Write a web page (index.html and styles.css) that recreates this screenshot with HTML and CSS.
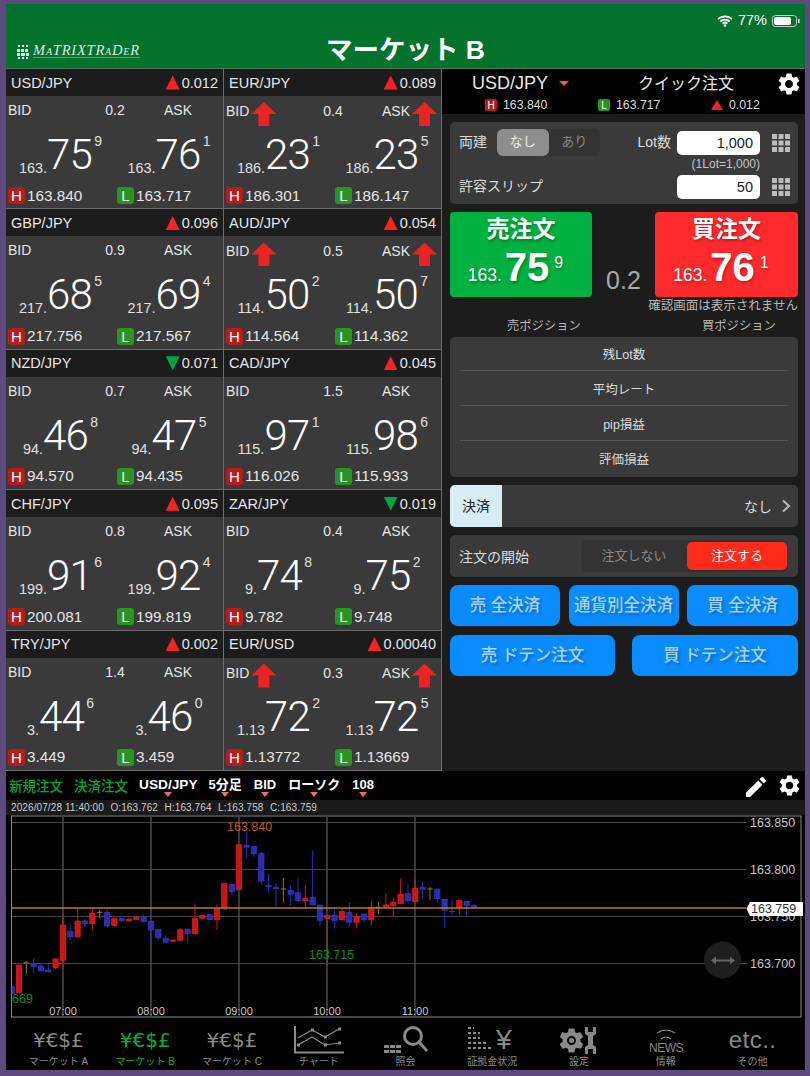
FILE: index.html
```html
<!DOCTYPE html>
<html lang="ja">
  <head>
    <meta charset="utf-8">
    <title>マーケット B</title>
    <link rel="stylesheet" href="styles.css">
  </head>
  <body>
    <svg class="defs" width="0" height="0">
      <symbol id="gear" viewBox="2 2 20 20">
        <path d="M19.14 12.94c.04-.3.06-.61.06-.94 0-.32-.02-.64-.07-.94l2.03-1.58c.18-.14.23-.41.12-.61l-1.92-3.32c-.12-.22-.37-.29-.59-.22l-2.39.96c-.5-.38-1.03-.7-1.62-.94l-.36-2.54c-.04-.24-.24-.41-.48-.41h-3.84c-.24 0-.43.17-.47.41l-.36 2.54c-.59.24-1.13.57-1.62.94l-2.39-.96c-.22-.08-.47 0-.59.22L2.74 8.87c-.12.21-.08.47.12.61l2.03 1.58c-.05.3-.09.63-.09.94s.02.64.07.94l-2.03 1.58c-.18.14-.23.41-.12.61l1.92 3.32c.12.22.37.29.59.22l2.39-.96c.5.38 1.03.7 1.62.94l.36 2.54c.05.24.24.41.48.41h3.84c.24 0 .44-.17.47-.41l.36-2.54c.59-.24 1.13-.56 1.62-.94l2.39.96c.22.08.47 0 .59-.22l1.92-3.32c.12-.22.07-.47-.12-.61l-2.01-1.58zM12 15.6c-1.98 0-3.6-1.62-3.6-3.6s1.62-3.6 3.6-3.6 3.6 1.62 3.6 3.6-1.62 3.6-3.6 3.6z"/>
      </symbol>
      <symbol id="keypad" viewBox="0 0 18 18">
        <path d="M0 0h5v5H0zM6.500 0h5v5h-5zM13 0h5v5h-5zM0 6.500h5v5H0zM6.500 6.500h5v5h-5zM13 6.500h5v5h-5zM0 13h5v5H0zM6.500 13h5v5h-5zM13 13h5v5h-5z"/>
      </symbol>
    </svg>

    <div class="app">
      <header class="topbar">
        <div class="status">
          <svg class="wifi" width="16" height="12" viewBox="0 0 16 12">
            <path d="M1 4.200a10 10 0 0 1 14 0M3.300 6.500a6.800 6.800 0 0 1 9.400 0M5.600 8.700a3.500 3.500 0 0 1 4.800 0" />
            <circle cx="8" cy="10.600" r="1.300" />
          </svg>
          <span>77%</span>
          <svg class="battery" width="28" height="12" viewBox="0 0 28 12">
            <rect x=".5" y=".5" width="24" height="11" rx="3" />
            <rect class="battery-level" x="2" y="2" width="17" height="8" rx="2" />
            <rect class="battery-level" x="26" y="4" width="1.500" height="4" />
          </svg>
        </div>
        <div class="titlerow">
          <div class="logo">
            <svg width="13" height="15" viewBox="0 0 13 15">
              <path d="M1 1h2v2H1zM5 1h2v2H5zM9 1h2v2H9zM0 5h3v3H0zM4 5h3v3H4zM8 5h3v3H8zM0 9h3v3H0zM4 9h4v3H4zM9 9h3v3H9zM1 13h2v2H1zM5 13h2v2H5zM9 13h2v2H9z" />
            </svg>
            <span class="logo-text">MaTRIXTRaDeR</span>
          </div>
          <h1 class="page-title">マーケット B</h1>
        </div>
      </header>

      <main class="main">
        <section class="market-grid">
          <article class="cell">
            <div class="cell-title"><span>USD/JPY</span><span class="change"><i class="tri tri-up"></i>0.012</span></div>
            <div class="cell-head"><span class="side">BID</span><span class="spread">0.2</span><span class="side side-ask">ASK</span></div>
            <div class="prices">
              <div class="price"><small>163.</small><b>75</b><sup>9</sup></div>
              <div class="price"><small>163.</small><b>76</b><sup>1</sup></div>
            </div>
            <div class="hilo"><span><i class="badge badge-h">H</i>163.840</span><span><i class="badge badge-l">L</i>163.717</span></div>
          </article>
          <article class="cell">
            <div class="cell-title"><span>EUR/JPY</span><span class="change"><i class="tri tri-up"></i>0.089</span></div>
            <div class="cell-head"><span class="side">BID<i class="arrow"></i></span><span class="spread">0.4</span><span class="side side-ask">ASK<i class="arrow"></i></span></div>
            <div class="prices">
              <div class="price"><small>186.</small><b>23</b><sup>1</sup></div>
              <div class="price"><small>186.</small><b>23</b><sup>5</sup></div>
            </div>
            <div class="hilo"><span><i class="badge badge-h">H</i>186.301</span><span><i class="badge badge-l">L</i>186.147</span></div>
          </article>
          <article class="cell">
            <div class="cell-title"><span>GBP/JPY</span><span class="change"><i class="tri tri-up"></i>0.096</span></div>
            <div class="cell-head"><span class="side">BID</span><span class="spread">0.9</span><span class="side side-ask">ASK</span></div>
            <div class="prices">
              <div class="price"><small>217.</small><b>68</b><sup>5</sup></div>
              <div class="price"><small>217.</small><b>69</b><sup>4</sup></div>
            </div>
            <div class="hilo"><span><i class="badge badge-h">H</i>217.756</span><span><i class="badge badge-l">L</i>217.567</span></div>
          </article>
          <article class="cell">
            <div class="cell-title"><span>AUD/JPY</span><span class="change"><i class="tri tri-up"></i>0.054</span></div>
            <div class="cell-head"><span class="side">BID<i class="arrow"></i></span><span class="spread">0.5</span><span class="side side-ask">ASK<i class="arrow"></i></span></div>
            <div class="prices">
              <div class="price"><small>114.</small><b>50</b><sup>2</sup></div>
              <div class="price"><small>114.</small><b>50</b><sup>7</sup></div>
            </div>
            <div class="hilo"><span><i class="badge badge-h">H</i>114.564</span><span><i class="badge badge-l">L</i>114.362</span></div>
          </article>
          <article class="cell">
            <div class="cell-title"><span>NZD/JPY</span><span class="change"><i class="tri tri-down"></i>0.071</span></div>
            <div class="cell-head"><span class="side">BID</span><span class="spread">0.7</span><span class="side side-ask">ASK</span></div>
            <div class="prices">
              <div class="price"><small>94.</small><b>46</b><sup>8</sup></div>
              <div class="price"><small>94.</small><b>47</b><sup>5</sup></div>
            </div>
            <div class="hilo"><span><i class="badge badge-h">H</i>94.570</span><span><i class="badge badge-l">L</i>94.435</span></div>
          </article>
          <article class="cell">
            <div class="cell-title"><span>CAD/JPY</span><span class="change"><i class="tri tri-up"></i>0.045</span></div>
            <div class="cell-head"><span class="side">BID</span><span class="spread">1.5</span><span class="side side-ask">ASK</span></div>
            <div class="prices">
              <div class="price"><small>115.</small><b>97</b><sup>1</sup></div>
              <div class="price"><small>115.</small><b>98</b><sup>6</sup></div>
            </div>
            <div class="hilo"><span><i class="badge badge-h">H</i>116.026</span><span><i class="badge badge-l">L</i>115.933</span></div>
          </article>
          <article class="cell">
            <div class="cell-title"><span>CHF/JPY</span><span class="change"><i class="tri tri-up"></i>0.095</span></div>
            <div class="cell-head"><span class="side">BID</span><span class="spread">0.8</span><span class="side side-ask">ASK</span></div>
            <div class="prices">
              <div class="price"><small>199.</small><b>91</b><sup>6</sup></div>
              <div class="price"><small>199.</small><b>92</b><sup>4</sup></div>
            </div>
            <div class="hilo"><span><i class="badge badge-h">H</i>200.081</span><span><i class="badge badge-l">L</i>199.819</span></div>
          </article>
          <article class="cell">
            <div class="cell-title"><span>ZAR/JPY</span><span class="change"><i class="tri tri-down"></i>0.019</span></div>
            <div class="cell-head"><span class="side">BID</span><span class="spread">0.4</span><span class="side side-ask">ASK</span></div>
            <div class="prices">
              <div class="price"><small>9.</small><b>74</b><sup>8</sup></div>
              <div class="price"><small>9.</small><b>75</b><sup>2</sup></div>
            </div>
            <div class="hilo"><span><i class="badge badge-h">H</i>9.782</span><span><i class="badge badge-l">L</i>9.748</span></div>
          </article>
          <article class="cell">
            <div class="cell-title"><span>TRY/JPY</span><span class="change"><i class="tri tri-up"></i>0.002</span></div>
            <div class="cell-head"><span class="side">BID</span><span class="spread">1.4</span><span class="side side-ask">ASK</span></div>
            <div class="prices">
              <div class="price"><small>3.</small><b>44</b><sup>6</sup></div>
              <div class="price"><small>3.</small><b>46</b><sup>0</sup></div>
            </div>
            <div class="hilo"><span><i class="badge badge-h">H</i>3.449</span><span><i class="badge badge-l">L</i>3.459</span></div>
          </article>
          <article class="cell">
            <div class="cell-title"><span>EUR/USD</span><span class="change"><i class="tri tri-up"></i>0.00040</span></div>
            <div class="cell-head"><span class="side">BID<i class="arrow"></i></span><span class="spread">0.3</span><span class="side side-ask">ASK<i class="arrow"></i></span></div>
            <div class="prices">
              <div class="price"><small>1.13</small><b>72</b><sup>2</sup></div>
              <div class="price"><small>1.13</small><b>72</b><sup>5</sup></div>
            </div>
            <div class="hilo"><span><i class="badge badge-h">H</i>1.13772</span><span><i class="badge badge-l">L</i>1.13669</span></div>
          </article>
        </section>

        <section class="quick">
          <div class="quick-head">
            <div class="quick-top">
              <span class="quick-pair">USD/JPY<i class="caret"></i></span>
              <span class="quick-name">クイック注文</span>
              <svg class="quick-gear" width="22" height="22"><use href="#gear" /></svg>
            </div>
            <div class="quick-stats">
              <span><i class="badge badge-h mini">H</i>163.840</span>
              <span><i class="badge badge-l mini">L</i>163.717</span>
              <span><i class="tri tri-up mini-tri"></i>0.012</span>
            </div>
          </div>

          <div class="card form-card">
            <div class="form-row">
              <span class="form-label">両建</span>
              <div class="seg seg-hedge"><span class="seg-on">なし</span><span>あり</span></div>
              <span class="form-label lot-label">Lot数</span>
              <div class="input">1,000</div>
              <svg class="keypad" width="18" height="18"><use href="#keypad" /></svg>
            </div>
            <div class="lot-note">(1Lot=1,000)</div>
            <div class="form-row form-row-slip">
              <span class="form-label">許容スリップ</span>
              <div class="input input-push">50</div>
              <svg class="keypad" width="18" height="18"><use href="#keypad" /></svg>
            </div>
          </div>

          <div class="order-row">
            <div class="order order-sell">
              <div class="order-title">売注文</div>
              <div class="order-price"><small>163.</small><b>75</b><sup>9</sup></div>
            </div>
            <div class="order-spread">0.2</div>
            <div class="order order-buy">
              <div class="order-title">買注文</div>
              <div class="order-price"><small>163.</small><b>76</b><sup>1</sup></div>
            </div>
          </div>
          <div class="confirm-note">確認画面は表示されません</div>
          <div class="pos-labels"><span>売ポジション</span><span>買ポジション</span></div>

          <div class="card pos-card">
            <div class="pos-row">残Lot数</div>
            <div class="pos-row">平均レート</div>
            <div class="pos-row">pip損益</div>
            <div class="pos-row">評価損益</div>
          </div>

          <div class="card settle">
            <span class="settle-tag">決済</span>
            <span class="settle-value">なし</span>
            <svg class="chevron" width="10" height="14" viewBox="0 0 10 14"><path d="M2 1.500 8 7l-6 5.500" /></svg>
          </div>

          <div class="card start">
            <span>注文の開始</span>
            <div class="seg seg-start"><span>注文しない</span><span class="seg-red">注文する</span></div>
          </div>

          <div class="btn-row btn-row-3">
            <div class="btn">売 全決済</div>
            <div class="btn">通貨別全決済</div>
            <div class="btn">買 全決済</div>
          </div>
          <div class="btn-row btn-row-2">
            <div class="btn">売 ドテン注文</div>
            <div class="btn">買 ドテン注文</div>
          </div>
        </section>
      </main>

      <section class="chart">
        <div class="chart-tools">
          <span class="tool-green">新規注文</span>
          <span class="tool-green">決済注文</span>
          <span class="tool-pick tool-pair">USD/JPY</span>
          <span class="tool-pick">5分足</span>
          <span class="tool-pick">BID</span>
          <span class="tool-pick">ローソク</span>
          <span class="tool-pick">108</span>
          <svg class="tool-pencil" width="20" height="20" viewBox="3 3 18 18">
            <path d="M3 17.250V21h3.750L17.810 9.940l-3.750-3.750L3 17.250zM20.710 7.040c.39-.39.39-1.020 0-1.410l-2.340-2.340c-.39-.39-1.020-.39-1.410 0l-1.830 1.830 3.750 3.750 1.830-1.830z" />
          </svg>
          <svg class="tool-gear" width="21" height="21"><use href="#gear" /></svg>
        </div>
        <div class="ohlc">
          <span>2026/07/28 11:40:00</span><span>O:163.762</span><span>H:163.764</span><span>L:163.758</span><span>C:163.759</span>
        </div>
        <svg class="plot" width="799" height="203" viewBox="6 815 799 203">
          <rect class="plot-frame" x="11.500" y="816" width="789.500" height="201" />
          <path class="grid-v" d="M63 817V1016M151 817V1016M239 817V1016M327 817V1016M415 817V1016" />
          <path class="grid-h" d="M12 822.500H747M12 869.500H747M12 916.500H747M12 963.500H747" />
          <text class="axis" x="750" y="827">163.850</text>
          <text class="axis" x="750" y="874">163.800</text>
          <text class="axis" x="750" y="921">163.750</text>
          <text class="axis" x="750" y="968">163.700</text>
          <text class="time" x="63" y="1015">07:00</text>
          <text class="time" x="151" y="1015">08:00</text>
          <text class="time" x="239" y="1015">09:00</text>
          <text class="time" x="327" y="1015">10:00</text>
          <text class="time" x="415" y="1015">11:00</text>

          <!-- candles, coordinates at 3x from y 765 -->
          <g transform="translate(0 765) scale(.3333)">
            <path class="wick-red" d="M167 580V612M189 447V612M233 430V515M277 432V497M343 460V485M387 460V468M541 490V527M585 415V506M607 449V463M651 418V494M673 355V435M717 239V376M916 360V430M982 451V600M1026 432V467M1070 445V491M1114 407V483M1158 385V430M1180 397V454M1202 340V416M1246 342V410M1378 406V449" />
            <path class="body-red" d="M49 600h16v83h-16zM159 582h16v26h-16zM181 480h16v106h-16zM225 468h16v47h-16zM269 445h16v31h-16zM335 460h16v22h-16zM379 462h16v5h-16zM401 457h16v7h-16zM511 525h16v4h-16zM533 494h16v32h-16zM577 460h16v46h-16zM599 451h16v9h-16zM643 431h16v33h-16zM665 355h16v75h-16zM709 239h16v135h-16zM908 400h16v7h-16zM974 451h16v9h-16zM1018 439h16v25h-16zM1062 455h16v17h-16zM1106 427h16v37h-16zM1150 420h16v5h-16zM1172 412h16v10h-16zM1194 388h16v28h-16zM1238 370h16v40h-16zM1370 406h16v22h-16z" />
            <path class="wick-blue" d="M101 580V624M123 597V620M145 597V622M211 478V525M255 462V485M321 432V485M365 460V472M431 449V472M453 469V543M475 493V525M497 512V532M563 493V533M629 447V467M696 358V390M740 201V280M762 244V276M784 260V358M806 326V384M828 355V428M872 362V422M894 339V412M938 257V420M960 420V483M1004 435V491M1048 412V485M1092 447V472M1224 358V415M1268 352V404M1312 372V414M1334 403V488M1356 405V450M1400 409V453M1422 417V430" />
            <path class="body-blue" d="M36 665h7v22h-7zM93 597h16v8h-16zM115 603h16v14h-16zM137 615h16v5h-16zM203 499h16v16h-16zM247 468h16v8h-16zM313 442h16v41h-16zM357 460h16v7h-16zM423 456h16v14h-16zM445 469h16v26h-16zM467 493h16v25h-16zM489 520h16v12h-16zM555 493h16v13h-16zM621 449h16v15h-16zM688 358h16v22h-16zM732 241h16v6h-16zM754 244h16v22h-16zM776 265h16v83h-16zM798 361h16v4h-16zM820 367h16v4h-16zM864 376h16v12h-16zM886 383h16v24h-16zM930 397h16v22h-16zM952 420h16v47h-16zM996 451h16v16h-16zM1040 442h16v30h-16zM1084 447h16v17h-16zM1216 386h16v21h-16zM1260 367h16v6h-16zM1304 372h16v29h-16zM1326 403h16v33h-16zM1348 439h16v1h-16zM1392 409h16v13h-16zM1414 421h16v7h-16z" />
            <path class="wick-doji" d="M79 588V626M71 594H87M299 436V460M291 442H307M850 339V412M842 372H858M1136 412V449M1128 427H1144M1290 365V405M1282 372H1298" />
          </g>

          <path class="last-line" d="M12 908H746" />
          <text class="mark-high" x="227" y="831">163.840</text>
          <text class="mark-low" x="309" y="959">163.715</text>
          <text class="mark-low" x="12" y="1003">669</text>
          <path class="last-tag" d="M746.500 908.500 750 902H803V916H750z" />
          <text class="last-text" x="751" y="913">163.759</text>
          <circle class="pan" cx="722.500" cy="960" r="18.500" />
          <path class="pan-line" d="M714 960.500H732" />
          <path class="pan-head" d="M711 960.500l5-4v8zM735 960.500l-5-4v8z" />
        </svg>
      </section>

      <nav class="tabs">
        <div class="tab"><span class="tab-fx">¥€$£</span><span class="tab-label">マーケット A</span></div>
        <div class="tab tab-on"><span class="tab-fx">¥€$£</span><span class="tab-label">マーケット B</span></div>
        <div class="tab"><span class="tab-fx">¥€$£</span><span class="tab-label">マーケット C</span></div>
        <div class="tab">
          <svg class="tab-icon" width="50" height="28" viewBox="0 0 50 28">
            <path class="icon-line icon-thick" d="M1 0V26.500H50" />
            <path class="icon-line" d="M4 12 18 4 31 11 45 3M4 19 18 11 31 19 45 17" />
            <path class="icon-dots" d="M17 2.500h3v3h-3zM30 9.500h3v3h-3zM44 1.500h3v3h-3zM3 17.500h3v3H3zM30 17.500h3v3h-3zM44 15.500h3v3h-3z" />
          </svg>
          <span class="tab-label">チャート</span>
        </div>
        <div class="tab">
          <svg class="tab-icon" width="48" height="28" viewBox="0 0 48 28">
            <path class="icon-dots" d="M3 19h5v3H3zM9 19h5v3H9zM15 19h5v3h-5zM3 24h5v3H3zM9 24h5v3H9zM15 24h5v3h-5z" />
            <circle class="icon-line icon-thicker" cx="32" cy="10" r="8.500" />
            <path class="icon-line icon-thicker" d="M38 16 46 25" />
          </svg>
          <span class="tab-label">照会</span>
        </div>
        <div class="tab">
          <svg class="tab-icon tab-icon-tall" width="48" height="38" viewBox="0 -8 48 38">
            <path class="icon-dash" d="M0 2H6M0 7H12M0 12H12M0 17H18M0 22H24" />
            <text class="icon-yen" x="28" y="23">¥</text>
          </svg>
          <span class="tab-label">証拠金状況</span>
        </div>
        <div class="tab">
          <svg class="tab-icon" width="40" height="28" viewBox="0 0 40 28">
            <use class="icon-fill" href="#gear" x="0" y="2" width="25" height="25" />
            <circle class="icon-fill" cx="12.500" cy="14.500" r="2.500" />
            <path class="icon-fill" d="M26 1h3v5h5V1h3v7l-3 2v9l3 2v7h-3v-5h-5v5h-3v-7l3-2v-9l-3-2z" />
          </svg>
          <span class="tab-label">設定</span>
        </div>
        <div class="tab">
          <svg class="tab-icon tab-icon-tall" width="40" height="30" viewBox="0 0 40 30">
            <path class="icon-line" d="M11 7Q20 1 29 7M15 13Q20 9 25 13" />
            <text class="icon-news" x="20" y="26">NEWS</text>
          </svg>
          <span class="tab-label">情報</span>
        </div>
        <div class="tab"><span class="tab-etc">etc..</span><span class="tab-label">その他</span></div>
      </nav>
    </div>
  </body>
</html>
```

FILE: styles.css
```css
* {
  box-sizing: border-box;
}

html,
body {
  height: 100%;
}

body {
  margin: 0;
  background-color: #5f4a7f;
  color: #fff;
  font-family: "Liberation Sans", "Noto Sans CJK JP", sans-serif;
  overflow: hidden;
}

i {
  font-style: normal;
}

.defs {
  position: absolute;
}

.app {
  width: 799px;
  height: 1066px;
  margin: 4px 0 0 6px;
  background-color: #000;
}

/* header */
.topbar {
  height: 65px;
  background-color: #02722c;
  border-bottom: 1px solid #4a7a5a;
}

.status {
  height: 25px;
  display: flex;
  align-items: flex-end;
  justify-content: flex-end;
  gap: 5px;
  padding-right: 5px;
  font-size: 14.500px;
  line-height: 17px;
}

.wifi path {
  fill: none;
  stroke: #fff;
  stroke-width: 1.800;
}

.wifi circle {
  fill: #fff;
}

.wifi,
.battery {
  margin-bottom: 2px;
}

.battery rect {
  fill: none;
  stroke: #ccd;
  stroke-width: 1;
}

.battery .battery-level {
  fill: #fff;
  stroke: none;
}

.titlerow {
  display: grid;
  grid-template-columns: 1fr auto 1fr;
  align-items: center;
  height: 39px;
}

.logo {
  display: flex;
  align-items: center;
  gap: 3px;
  padding: 5px 0 0 11px;
}

.logo svg {
  fill: #dfeee2;
}

.logo-text {
  font-family: "Liberation Serif", serif;
  font-style: italic;
  font-variant: small-caps;
  font-size: 14.500px;
  letter-spacing: 0.8px;
  color: #dfeee2;
  border-bottom: 1px solid #5ea178;
  line-height: 13px;
}

.page-title {
  margin: 0;
  font-size: 26.500px;
  font-weight: 700;
  line-height: 36px;
  position: relative;
  top: 1px;
}

/* layout */
.main {
  display: grid;
  grid-template-columns: 436px 363px;
  height: 702px;
}

/* market cells */
.market-grid {
  display: grid;
  grid-template-columns: 218px 218px;
  grid-template-rows: repeat(5, 1fr);
  background-color: #6c6c6c;
  border-right: 1px solid #6c6c6c;
}

.cell {
  display: flex;
  flex-direction: column;
  background-color: #3a3a3a;
  border-bottom: 1px solid #6c6c6c;
  border-right: 1px solid #6c6c6c;
  color: #e6e6e6;
}

.cell-title {
  display: flex;
  justify-content: space-between;
  align-items: center;
  height: 27px;
  flex: none;
  padding: 0 5px;
  background-color: #1c1c1c;
  font-size: 14.500px;
}

.change {
  display: flex;
  align-items: center;
  gap: 2px;
}

.tri {
  display: inline-block;
  width: 14px;
  height: 14px;
  background-color: #f52323;
  clip-path: polygon(50% 0, 100% 100%, 0 100%);
}

.tri-down {
  background-color: #02a53f;
  clip-path: polygon(0 0, 100% 0, 50% 100%);
}

.cell-head {
  display: grid;
  grid-template-columns: 91px 36px 1fr;
  align-items: center;
  height: 28px;
  padding-left: 2px;
  font-size: 14px;
}

.side {
  display: flex;
  align-items: center;
  gap: 2px;
}

.side-ask {
  padding-left: 29px;
}

.spread {
  text-align: center;
  padding-right: 4px;
}

.arrow {
  display: block;
  flex: none;
  width: 25px;
  height: 24px;
  margin-top: 6px;
  background-color: #ea2424;
  clip-path: polygon(50% 0, 100% 50%, 72% 50%, 72% 100%, 28% 100%, 28% 50%, 0 50%);
}

.prices {
  display: grid;
  grid-template-columns: 109px 108px;
  height: 56px;
  padding-top: 3px;
}

.price {
  height: 53px;
  text-align: center;
  white-space: nowrap;
  color: #fff;
  line-height: 56px;
}

.price small {
  font-size: 14.400px;
  color: #e0e0e0;
  vertical-align: -4px;
}

.price b {
  font-family: Roboto, "Liberation Sans", sans-serif;
  font-size: 42px;
  font-weight: 300;
  letter-spacing: -0.6px;
}

.price sup {
  font-size: 14px;
  line-height: 0;
  margin-left: 2px;
  color: #e0e0e0;
  vertical-align: 23px;
}

.hilo {
  display: grid;
  grid-template-columns: 109px 1fr;
  align-items: center;
  flex: 1;
  padding: 3px 0 0 2px;
  font-size: 15.300px;
}

.hilo span {
  display: flex;
  align-items: center;
  gap: 2px;
}

.badge {
  display: inline-flex;
  align-items: center;
  justify-content: center;
  width: 17px;
  height: 17px;
  border-radius: 3px;
  font-size: 15px;
  color: #fff;
}

.badge-h {
  background-color: #b71c1c;
}

.badge-l {
  background-color: #2a9420;
}

/* quick order */
.quick {
  background-color: #1c1c1c;
  display: flex;
  flex-direction: column;
}

.quick-head {
  height: 45px;
  background-color: #000;
  padding-top: 3px;
  margin-bottom: 8px;
}

.quick-top {
  position: relative;
  display: flex;
  align-items: center;
  height: 23px;
  padding-left: 30px;
  color: #e6e6e6;
}

.quick-pair {
  font-size: 18px;
  display: flex;
  align-items: center;
  width: 166px;
}

.caret {
  display: block;
  width: 0;
  height: 0;
  margin-left: 11px;
  border-left: 5px solid transparent;
  border-right: 5px solid transparent;
  border-top: 5px solid #e65a5a;
}

.quick-name {
  font-size: 16px;
  margin-bottom: 4px;
}

.quick-gear {
  position: absolute;
  top: 1px;
  right: 5px;
  fill: #fff;
}

.quick-stats {
  display: grid;
  grid-template-columns: 113px 113px 1fr;
  padding: 3px 0 0 43px;
  font-size: 12.300px;
  color: #ddd;
}

.quick-stats span {
  display: flex;
  align-items: center;
  gap: 6px;
}

.badge.mini {
  width: 12px;
  height: 12px;
  border-radius: 2px;
  font-size: 10px;
}

.tri.mini-tri {
  width: 12px;
  height: 10px;
}

.card {
  margin: 0 7px 8px 8px;
  background-color: #3a3a3a;
  border-radius: 5px;
  font-size: 14px;
  color: #ddd;
}

.form-card {
  height: 82px;
  padding: 7px 8px 0 9px;
}

.form-row {
  display: flex;
  align-items: center;
  height: 27px;
}

.form-label {
  padding-bottom: 3px;
}

.form-row-slip {
  margin-top: 3px;
}

.seg {
  display: flex;
  background-color: #333;
  border-radius: 6px;
  color: #888;
}

.seg-hedge {
  width: 103px;
  height: 27px;
  margin-left: 10px;
  font-size: 13px;
  line-height: 25px;
  text-align: center;
}

.seg-hedge span {
  width: 50%;
}

.seg-hedge .seg-on {
  background-color: #8e8e8e;
  border-radius: 6px;
  color: #eee;
}

.lot-label {
  margin-left: auto;
  margin-right: 6px;
}

.input {
  width: 83px;
  height: 24px;
  padding-right: 7px;
  background-color: #fff;
  border-radius: 5px;
  color: #222;
  font-size: 14.500px;
  line-height: 25px;
  text-align: right;
}

.input-push {
  margin-left: auto;
}

.keypad {
  margin-left: 12px;
  fill: #bcbcbc;
}

.lot-note {
  height: 14px;
  padding-right: 30px;
  font-size: 12px;
  line-height: 16px;
  text-align: right;
  color: #c4c4c4;
}

.order-row {
  display: grid;
  grid-template-columns: 142px 1fr 143px;
  height: 81px;
  margin: 0 7px 0 8px;
}

.order {
  border-radius: 4px;
  text-align: center;
  text-shadow: 1px 2px 3px rgba(0, 0, 0, 0.3);
}

.order-sell {
  background-color: #00b140;
}

.order-buy {
  background-color: #ff2a2c;
}

.order-title {
  font-size: 23px;
  font-weight: 700;
  line-height: 28px;
  padding-top: 3px;
}

.order-price {
  display: flex;
  justify-content: center;
  align-items: baseline;
  line-height: 44px;
  margin-top: 2px;
  padding-right: 11px;
}

.order-price small {
  font-size: 17.500px;
  margin-right: 3px;
}

.order-price b {
  font-size: 40px;
}

.order-price sup {
  align-self: flex-start;
  font-size: 16px;
  line-height: 16px;
  margin: 10px 0 0 5px;
}

.order-spread {
  align-self: end;
  text-align: center;
  color: #a8a8a8;
  font-size: 25px;
  line-height: 32px;
  margin-bottom: 1px;
}

.confirm-note {
  margin: 4px 7px 0 0;
  font-size: 12.500px;
  line-height: 18px;
  text-align: right;
  color: #b8b8b8;
}

.pos-labels {
  display: grid;
  grid-template-columns: 195px 1fr;
  height: 18px;
  margin: 2px 0;
  padding-left: 65px;
  font-size: 12.300px;
  line-height: 18px;
  color: #b8b8b8;
}

.pos-card {
  height: 140px;
  padding: 0 10px;
  font-size: 12.500px;
}

.pos-row {
  height: 35px;
  line-height: 38px;
  text-align: center;
  border-bottom: 1px solid #555;
}

.pos-row:first-child {
  height: 34px;
  line-height: 36px;
}

.pos-row:last-child {
  border-bottom: 0;
}

.settle {
  display: flex;
  align-items: center;
  height: 42px;
  padding-right: 7px;
  overflow: hidden;
}

.settle-tag {
  width: 52px;
  height: 100%;
  margin-right: auto;
  background-color: #d8ecf4;
  color: #222;
  line-height: 42px;
  text-align: center;
}

.settle-value {
  margin-right: 9px;
}

.chevron {
  fill: none;
  stroke: #bbb;
  stroke-width: 2;
}

.start {
  display: flex;
  align-items: center;
  justify-content: space-between;
  height: 42px;
  padding: 0 11px 0 9px;
}

.seg-start {
  width: 206px;
  height: 32px;
  padding: 2px 0;
  font-size: 13px;
  line-height: 28px;
  text-align: center;
}

.seg-start span {
  width: 100px;
  flex: 1;
}

.seg-start .seg-red {
  flex: none;
  background-color: #ff2a1a;
  border-radius: 5px;
  color: #f4f4f4;
}

.btn-row {
  display: grid;
  margin: 0 7px 9px 8px;
}

.btn-row-3 {
  grid-template-columns: 110px 110px 111px;
  column-gap: 8.500px;
}

.btn-row-2 {
  grid-template-columns: 165px 166px;
  column-gap: 17px;
}

.btn {
  height: 41px;
  background-color: #0a8cff;
  border-radius: 8px;
  color: #a9d3f3;
  font-size: 16.500px;
  font-weight: 500;
  line-height: 41px;
  text-align: center;
  text-shadow: 2px 2px 3px rgba(0, 0, 0, 0.25);
  white-space: nowrap;
}

/* chart */
.chart {
  height: 247px;
}

.chart-tools {
  display: flex;
  align-items: flex-start;
  height: 29px;
  padding-left: 3px;
  font-size: 13px;
  font-weight: 700;
  line-height: 28px;
}

.tool-green {
  color: #00a63c;
  margin-right: 11px;
  font-weight: 500;
  font-size: 13.500px;
  line-height: 32px;
  white-space: nowrap;
}

.tool-pick {
  position: relative;
  margin-right: 12px;
  white-space: nowrap;
}

.tool-pair {
  margin-right: 11px;
  font-size: 13.700px;
}

.tool-pick::after {
  content: "";
  position: absolute;
  left: 50%;
  top: 21px;
  margin-left: -4px;
  border-left: 4px solid transparent;
  border-right: 4px solid transparent;
  border-top: 5px solid #f26a6a;
}

.tool-pencil {
  margin: 6px 0 0 auto;
  fill: #fff;
}

.tool-gear {
  margin: 4px 5px 0 13px;
  fill: #fff;
}

.ohlc {
  display: flex;
  gap: 6.500px;
  height: 15px;
  padding-left: 5px;
  background-color: #1a1a1a;
  color: #ccc;
  font-size: 10px;
  letter-spacing: 0.1px;
  line-height: 15px;
}

.plot {
  display: block;
}

.plot-frame {
  fill: #000;
  stroke: #8a8a8a;
  stroke-width: 1;
}

.grid-v {
  stroke: #6e6e6e;
  stroke-width: 1;
}

.grid-h {
  stroke: #444;
  stroke-width: 1;
}

.axis {
  fill: #c8c8c8;
  font-size: 12.500px;
}

.time {
  fill: #c8c8c8;
  font-size: 11px;
  text-anchor: middle;
}

.wick-red,
.wick-blue,
.wick-doji {
  fill: none;
  stroke-width: 3;
}

.wick-red {
  stroke: #d01818;
}

.wick-blue {
  stroke: #2c2cc4;
}

.wick-doji {
  stroke: #9a7a10;
}

.body-red {
  fill: #c81616;
  stroke: #f02020;
  stroke-width: 2;
}

.body-blue {
  fill: #2c2cb0;
  stroke: #3a3ad6;
  stroke-width: 2;
}

.last-line {
  stroke: #b8800c;
  stroke-width: 1.500;
}

.mark-high {
  fill: #c05a10;
  font-size: 12.500px;
}

.mark-low {
  fill: #0a8f1e;
  font-size: 12.500px;
}

.last-tag {
  fill: #fff;
}

.last-text {
  fill: #333;
  font-size: 12.500px;
}

.pan {
  fill: #1e1e1e;
}

.pan-line {
  stroke: #666;
  stroke-width: 2;
}

.pan-head {
  fill: #666;
}

/* tabs */
.tabs {
  display: grid;
  grid-template-columns: repeat(9, 1fr);
  height: 52px;
  padding: 0 9px;
}

.tab {
  display: flex;
  flex-direction: column;
  align-items: center;
  justify-content: flex-end;
  padding-bottom: 2px;
  color: #8a8a8a;
}

.tab-fx {
  font-family: "DejaVu Sans", sans-serif;
  font-size: 20px;
  line-height: 30px;
  letter-spacing: 0;
}

.tab-etc {
  font-size: 24px;
  line-height: 30px;
  letter-spacing: 0.5px;
}

.tab-label {
  font-size: 10px;
  line-height: 14px;
  white-space: nowrap;
}

.tab-on {
  color: #00b140;
}

.tab-icon {
  display: block;
  margin-bottom: 1px;
}

.tab-icon-tall {
  margin-bottom: -1px;
}

.icon-line {
  fill: none;
  stroke: #8a8a8a;
  stroke-width: 1.200;
}

.icon-thick {
  stroke-width: 2;
}

.icon-thicker {
  stroke-width: 3;
}

.icon-dots,
.icon-fill {
  fill: #8a8a8a;
}

.icon-dash {
  fill: none;
  stroke: #8a8a8a;
  stroke-width: 2;
  stroke-dasharray: 3 2;
}

.icon-yen {
  fill: #8a8a8a;
  font-size: 28px;
}

.icon-news {
  fill: #8a8a8a;
  font-size: 12px;
  letter-spacing: -0.5px;
  text-anchor: middle;
}
```
